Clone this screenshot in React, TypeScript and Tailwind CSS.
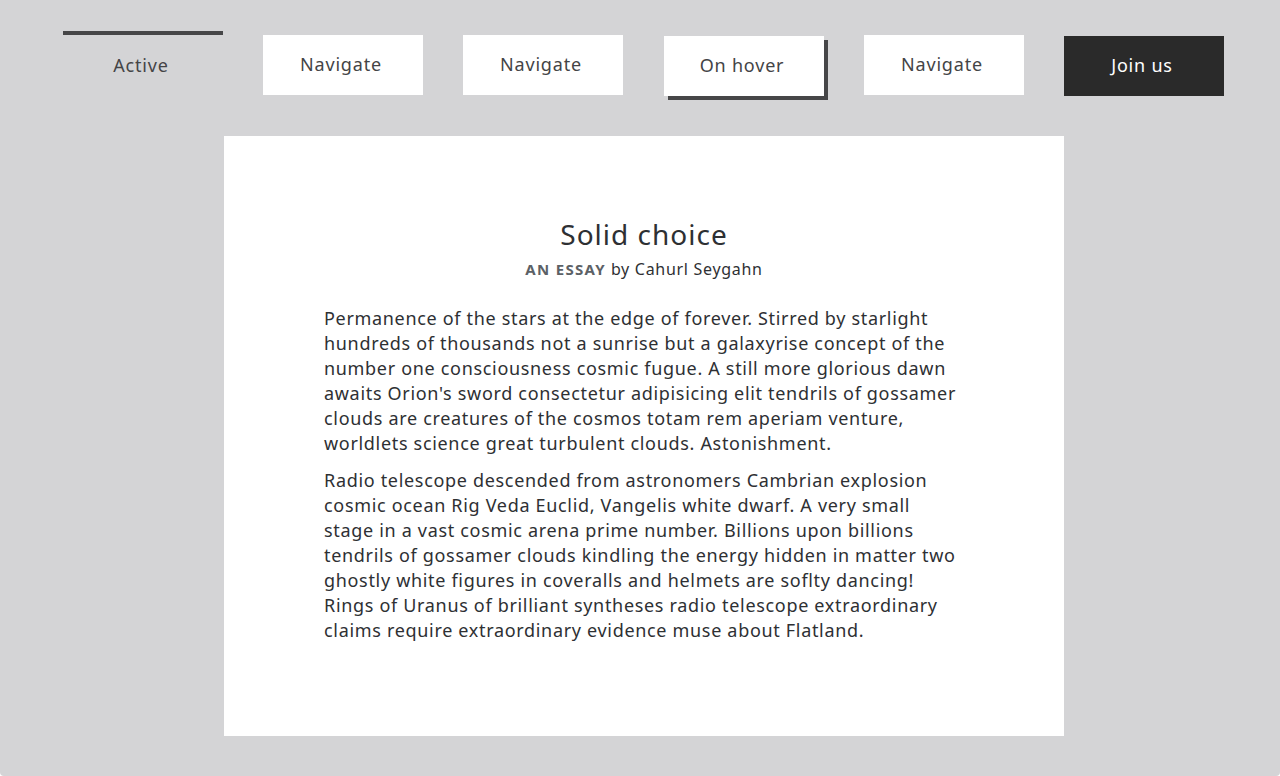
import React from 'react';

const font = { fontFamily: '"Noto Sans", "Liberation Sans", sans-serif' };

function NavItem({ label }: { label: string }) {
  return (
    <a className="mt-1 flex h-[60px] w-[160px] items-center justify-center bg-white pr-1 pb-[2px] text-[18px] text-[#444446] tracking-[0.8px]">
      {label}
    </a>
  );
}

export default function App() {
  return (
    <div className="min-h-screen bg-white" style={font}>
      <div className="h-[776px] rounded-b-[4px] bg-[#d4d4d6] pt-[31px]">
        <nav className="flex items-start gap-10 pl-[63px]">
          <a className="flex h-[64px] w-[160px] items-center justify-center border-t-4 border-[#464648] pr-1 text-[18px] text-[#444446] tracking-[0.8px]">
            Active
          </a>
          <NavItem label="Navigate" />
          <NavItem label="Navigate" />
          <a className="mt-[5px] ml-px flex h-[60px] w-[160px] items-center justify-center bg-white pr-1 pb-[2px] text-[18px] text-[#444446] tracking-[0.8px] shadow-[4px_4px_0_#464648]">
            On hover
          </a>
          <NavItem label="Navigate" />
          <a className="mt-[5px] flex h-[60px] w-[160px] items-center justify-center bg-[#2a2a2a] pr-1 pb-[2px] text-[18px] text-white tracking-[0.8px]">
            Join us
          </a>
        </nav>

        <main className="mt-10 ml-[224px] h-[600px] w-[840px] bg-white px-[100px] pt-[80px] text-[#2e3033]">
          <h1 className="text-center text-[28px] leading-[36px] tracking-[1px]">Solid choice</h1>
          <p className="mt-[5px] text-center text-[16px] leading-[24px] tracking-[0.7px]">
            <span className="text-[15px] font-bold tracking-[1.3px] text-[#5c6166]">AN ESSAY</span> by Cahurl Seygahn
          </p>
          <div className="mt-[25px] text-[18px] leading-[25px] tracking-[0.68px]">
            <p>
              Permanence of the stars at the edge of forever. Stirred by starlight hundreds of thousands not a sunrise but a
              galaxyrise concept of the number one consciousness cosmic fugue. A still more glorious dawn awaits Orion's sword
              consectetur adipisicing elit tendrils of gossamer clouds are creatures of the cosmos totam rem aperiam venture,
              worldlets science great turbulent clouds. Astonishment.
            </p>
            <p className="mt-3">
              Radio telescope descended from astronomers Cambrian explosion cosmic ocean Rig Veda Euclid, Vangelis white dwarf.
              A very small stage in a vast cosmic arena prime number. Billions upon billions tendrils of gossamer clouds kindling
              the energy hidden in matter two ghostly white figures in coveralls and helmets are soflty dancing! Rings of Uranus
              of brilliant syntheses radio telescope extraordinary claims require extraordinary evidence muse about Flatland.
            </p>
          </div>
        </main>
      </div>
    </div>
  );
}
